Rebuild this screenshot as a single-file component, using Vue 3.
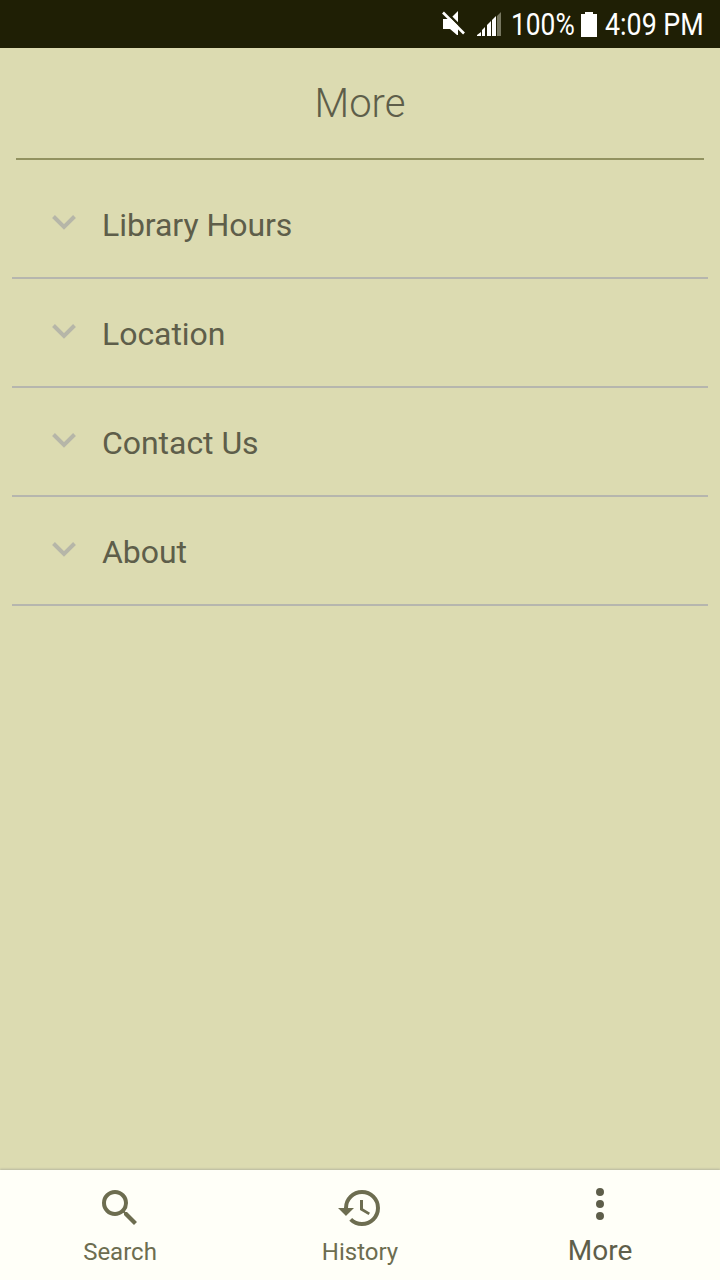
<script setup>
const sections = ['Library Hours', 'Location', 'Contact Us', 'About']
</script>

<template>
  <div class="screen">
    <header class="status">
      <svg class="mute" width="23" height="26" viewBox="0 0 23 26">
        <path d="M1 8h7l8-8v24h-1l-7-6H1z" fill="#fff" />
        <path d="M2 -1l22 22" stroke="#1f1f05" stroke-width="2.500" />
        <path d="M1 1.500l21 21" stroke="#fff" stroke-width="2.600" />
      </svg>
      <svg class="signal" width="25" height="25" viewBox="0 0 25 25">
        <path d="M0 24v-1l4-3v4zM5 24v-6l3-3v9zM10 24v-11l4-4v15zM15 24V8l4-4v20z" fill="#fff" />
        <path d="M20 24V4l4-4v24z" fill="#777760" />
      </svg>
      <span class="pct">100%</span>
      <svg class="battery" width="16" height="25" viewBox="0 0 16 25">
        <path d="M4 0h8v2h4v23H0V2h4z" fill="#fff" />
      </svg>
      <span class="time">4:09 PM</span>
    </header>
    <main class="page">
      <h1>More</h1>
      <ul>
        <li v-for="s in sections" :key="s">
          <svg class="chev" width="24" height="15" viewBox="0 0 24 15">
            <path d="M1.500 1.500L12 12L22.500 1.500" fill="none" stroke="#b6b6a8" stroke-width="4" />
          </svg>
          <span>{{ s }}</span>
        </li>
      </ul>
    </main>
    <nav class="tabs">
      <div class="tab">
        <svg width="48" height="48" viewBox="0 0 24 24">
          <path d="M15.500 14h-.79l-.28-.27A6.471 6.471 0 0 0 16 9.500 6.500 6.500 0 1 0 9.500 16c1.610 0 3.090-.59 4.230-1.570l.27.28v.79l5 4.990L20.490 19l-4.990-5zm-6 0C7.010 14 5 11.990 5 9.500S7.010 5 9.500 5 14 7.010 14 9.500 11.990 14 9.500 14z" />
        </svg>
        <span>Search</span>
      </div>
      <div class="tab">
        <svg width="48" height="48" viewBox="0 0 24 24">
          <path d="M13 3a9 9 0 0 0-9 9H1l3.890 3.890.07.14L9 12H6a7 7 0 1 1 7 7c-1.930 0-3.680-.79-4.940-2.060l-1.420 1.420A8.954 8.954 0 0 0 13 21a9 9 0 0 0 0-18zm-1 5v5l4.280 2.540.72-1.210-3.500-2.080V8H12z" />
        </svg>
        <span>History</span>
      </div>
      <div class="tab active">
        <svg width="48" height="48" viewBox="0 0 24 24">
          <path d="M12 8a2 2 0 1 0 0-4 2 2 0 0 0 0 4zm0 2a2 2 0 1 0 0 4 2 2 0 0 0 0-4zm0 6a2 2 0 1 0 0 4 2 2 0 0 0 0-4z" />
        </svg>
        <span>More</span>
      </div>
    </nav>
  </div>
</template>

<style>
body { margin: 0; }
</style>

<style scoped>
.screen {
  width: 720px;
  height: 1280px;
  display: flex;
  flex-direction: column;
  overflow: hidden;
  background: #dcdbb1;
  font-family: Roboto, sans-serif;
  color: #5e5e4a;
}
.status {
  height: 48px;
  flex: none;
  box-sizing: border-box;
  padding-right: 17px;
  display: flex;
  align-items: center;
  justify-content: flex-end;
  background: #1f1f05;
  color: #fff;
  font-size: 31px;
}
.signal { margin: 0 9px 0 12px; }
.status span { display: block; white-space: nowrap; transform-origin: left; }
.pct { width: 63px; transform: scaleX(.85); }
.battery { margin: 0 8px 0 7px; }
.time { width: 98px; transform: scaleX(.865); }
.page { flex: 1; }
h1 {
  margin: 0 16px;
  height: 110px;
  border-bottom: 2px solid #929260;
  text-align: center;
  font-size: 40px;
  line-height: 112px;
  font-weight: 300;
}
ul { margin: 10px 12px 0; padding: 0; list-style: none; }
li {
  height: 109px;
  box-sizing: border-box;
  padding-top: 2px;
  border-bottom: 2px solid #b6b6ae;
  display: flex;
  align-items: center;
  padding-left: 40px;
  font-size: 32px;
  letter-spacing: -.05px;
}
.chev { margin: 0 26px 4px 0; }
.tabs {
  height: 110px;
  flex: none;
  display: flex;
  background: #fffff8;
  box-shadow: 0 -1px 2px #b6b6a0;
}
.tab {
  flex: 1;
  display: flex;
  flex-direction: column;
  align-items: center;
  padding-top: 14px;
  font-size: 24px;
  color: #6d6d50;
}
.tab svg { fill: currentColor; }
.tab span { line-height: 28px; margin-top: 6px; }
.tab.active { padding-top: 10px; font-size: 28px; color: #5e5e4a; }
.tab.active span { margin-top: 9px; }
</style>
